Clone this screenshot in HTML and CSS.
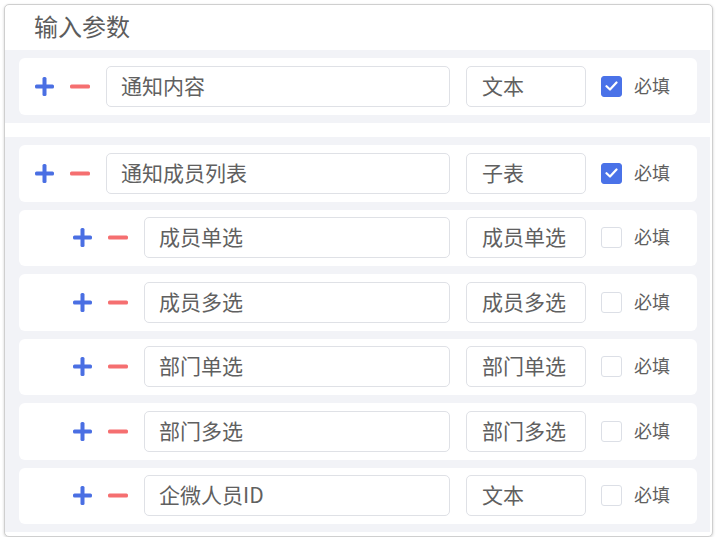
FILE: index.html
```html
<!DOCTYPE html>
<html>
    <head>
        <title>输入参数</title>
        <link rel="stylesheet" href="styles.css">
    </head>
    <body>
        <div class="panel">
            <div class="panel-title">输入参数</div>

            <div class="group">
                <div class="param-row">
                    <span class="btn-add"><svg width="19" height="19" viewBox="0 0 19 19"><rect x="0" y="7.5" width="19" height="4" rx="1.5"/><rect x="7.5" y="0" width="4" height="19" rx="1.5"/></svg></span>
                    <span class="btn-remove"><svg width="20" height="19" viewBox="0 0 20 19"><rect x="0" y="7.5" width="20" height="4" rx="1.5"/></svg></span>
                    <input type="text" class="input-name" value="通知内容">
                    <div class="input-type">文本</div>
                    <span class="check checked"><svg width="13" height="10" viewBox="0 0 13 10"><path d="M1.5 5.2 L5 8.5 L11.5 1.5" fill="none" stroke="#fff" stroke-width="2.2" stroke-linecap="round" stroke-linejoin="round"/></svg></span>
                    <span class="check-label">必填</span>
                </div>
            </div>

            <div class="group">
                <div class="param-row">
                    <span class="btn-add"><svg width="19" height="19" viewBox="0 0 19 19"><rect x="0" y="7.5" width="19" height="4" rx="1.5"/><rect x="7.5" y="0" width="4" height="19" rx="1.5"/></svg></span>
                    <span class="btn-remove"><svg width="20" height="19" viewBox="0 0 20 19"><rect x="0" y="7.5" width="20" height="4" rx="1.5"/></svg></span>
                    <input type="text" class="input-name" value="通知成员列表">
                    <div class="input-type">子表</div>
                    <span class="check checked"><svg width="13" height="10" viewBox="0 0 13 10"><path d="M1.5 5.2 L5 8.5 L11.5 1.5" fill="none" stroke="#fff" stroke-width="2.2" stroke-linecap="round" stroke-linejoin="round"/></svg></span>
                    <span class="check-label">必填</span>
                </div>
                <div class="param-row child">
                    <span class="btn-add"><svg width="19" height="19" viewBox="0 0 19 19"><rect x="0" y="7.5" width="19" height="4" rx="1.5"/><rect x="7.5" y="0" width="4" height="19" rx="1.5"/></svg></span>
                    <span class="btn-remove"><svg width="20" height="19" viewBox="0 0 20 19"><rect x="0" y="7.5" width="20" height="4" rx="1.5"/></svg></span>
                    <input type="text" class="input-name" value="成员单选">
                    <div class="input-type">成员单选</div>
                    <span class="check"></span>
                    <span class="check-label">必填</span>
                </div>
                <div class="param-row child">
                    <span class="btn-add"><svg width="19" height="19" viewBox="0 0 19 19"><rect x="0" y="7.5" width="19" height="4" rx="1.5"/><rect x="7.5" y="0" width="4" height="19" rx="1.5"/></svg></span>
                    <span class="btn-remove"><svg width="20" height="19" viewBox="0 0 20 19"><rect x="0" y="7.5" width="20" height="4" rx="1.5"/></svg></span>
                    <input type="text" class="input-name" value="成员多选">
                    <div class="input-type">成员多选</div>
                    <span class="check"></span>
                    <span class="check-label">必填</span>
                </div>
                <div class="param-row child">
                    <span class="btn-add"><svg width="19" height="19" viewBox="0 0 19 19"><rect x="0" y="7.5" width="19" height="4" rx="1.5"/><rect x="7.5" y="0" width="4" height="19" rx="1.5"/></svg></span>
                    <span class="btn-remove"><svg width="20" height="19" viewBox="0 0 20 19"><rect x="0" y="7.5" width="20" height="4" rx="1.5"/></svg></span>
                    <input type="text" class="input-name" value="部门单选">
                    <div class="input-type">部门单选</div>
                    <span class="check"></span>
                    <span class="check-label">必填</span>
                </div>
                <div class="param-row child">
                    <span class="btn-add"><svg width="19" height="19" viewBox="0 0 19 19"><rect x="0" y="7.5" width="19" height="4" rx="1.5"/><rect x="7.5" y="0" width="4" height="19" rx="1.5"/></svg></span>
                    <span class="btn-remove"><svg width="20" height="19" viewBox="0 0 20 19"><rect x="0" y="7.5" width="20" height="4" rx="1.5"/></svg></span>
                    <input type="text" class="input-name" value="部门多选">
                    <div class="input-type">部门多选</div>
                    <span class="check"></span>
                    <span class="check-label">必填</span>
                </div>
                <div class="param-row child">
                    <span class="btn-add"><svg width="19" height="19" viewBox="0 0 19 19"><rect x="0" y="7.5" width="19" height="4" rx="1.5"/><rect x="7.5" y="0" width="4" height="19" rx="1.5"/></svg></span>
                    <span class="btn-remove"><svg width="20" height="19" viewBox="0 0 20 19"><rect x="0" y="7.5" width="20" height="4" rx="1.5"/></svg></span>
                    <input type="text" class="input-name" value="企微人员ID">
                    <div class="input-type">文本</div>
                    <span class="check"></span>
                    <span class="check-label">必填</span>
                </div>
            </div>
        </div>
    </body>
</html>
```

FILE: styles.css
```css
body {
    margin: 0;
    background-color: #ffffff;
    font-family: "Noto Sans CJK SC", "Noto Sans", sans-serif;
}

.panel {
    box-sizing: border-box;
    width: 709px;
    margin: 4px 0 0 4px;
    padding: 0 2px 4px 0;
    background-color: #ffffff;
    border: 1px solid #cfcfcf;
    border-radius: 5px;
    box-shadow: 0 1px 3px rgba(0, 0, 0, 0.18);
}

.panel-title {
    height: 45px;
    line-height: 41px;
    padding-left: 29px;
    font-size: 24px;
    color: #5c5c5c;
}

.group {
    display: flex;
    flex-direction: column;
    gap: 8px;
    padding: 8px 13px 8px 14px;
    background-color: #f2f3f7;
}

.group + .group {
    margin-top: 14.5px;
}

.param-row {
    display: flex;
    align-items: center;
    height: 56.5px;
    padding: 0 27px 0 16px;
    background-color: #ffffff;
    border-radius: 6px;
}

.param-row.child {
    padding-left: 54px;
}

.btn-add,
.btn-remove {
    display: flex;
    margin-right: 16px;
}

.btn-add svg {
    fill: #4a6fe3;
}

.btn-remove svg {
    fill: #f56f70;
}

.input-name {
    flex: 1;
    min-width: 0;
    box-sizing: border-box;
    height: 41px;
    padding: 0 14px 3px;
    border: 1px solid #dfe1e6;
    border-radius: 5px;
    font-family: "Noto Sans CJK SC", "Noto Sans", sans-serif;
    font-size: 21px;
    color: #606060;
    outline: none;
}

.input-type {
    box-sizing: border-box;
    width: 120px;
    height: 41px;
    margin-left: 16px;
    padding-left: 15px;
    line-height: 36px;
    border: 1px solid #dfe1e6;
    border-radius: 5px;
    font-size: 21px;
    color: #606060;
}

.check {
    box-sizing: border-box;
    display: flex;
    align-items: center;
    justify-content: center;
    width: 21px;
    height: 21px;
    margin-left: 15px;
    border: 1px solid #dcdfe6;
    border-radius: 3px;
    background-color: #ffffff;
}

.check.checked {
    background-color: #4a72e8;
    border-color: #4a72e8;
}

.check-label {
    width: 36px;
    margin-left: 12px;
    margin-bottom: 3px;
    font-size: 18px;
    color: #606060;
}
```
